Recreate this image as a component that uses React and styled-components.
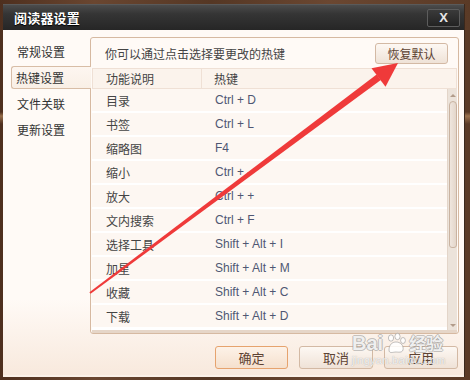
import React from 'react';
import styled, { createGlobalStyle } from 'styled-components';

const Global = createGlobalStyle`
  html, body { margin: 0; padding: 0; }
  body { background: #4d3020; font-family: "Noto Sans CJK SC", "Liberation Sans", sans-serif; }
  *, *::before, *::after { box-sizing: border-box; }
`;

const CJK = `"Noto Sans CJK SC", "Liberation Sans", sans-serif`;
const LATIN = `"Liberation Sans", "Noto Sans CJK SC", sans-serif`;

const Page = styled.div`
  position: relative;
  width: 470px;
  height: 380px;
  padding: 4px 5px 3px 3px;
  overflow: hidden;
  background:
    linear-gradient(180deg, rgba(0,0,0,0) 0, rgba(0,0,0,0) 112px, rgba(210,160,110,0.55) 116px, rgba(0,0,0,0) 124px),
    linear-gradient(90deg, #4e2f1e 0%, #6a4630 20%, #553724 45%, #6b4731 70%, #5a3a26 100%);
`;

const Dialog = styled.div`
  width: 462px;
  height: 373px;
  display: flex;
  flex-direction: column;
  border-right: 1px solid #3a281c;
`;

const TitleBar = styled.div`
  height: 26px;
  flex: none;
  display: flex;
  align-items: center;
  justify-content: space-between;
  padding: 0 4px 0 11px;
  background: linear-gradient(180deg, #4c4c4c 0%, #353535 35%, #262626 100%);
  border-top: 1px solid #5a5a5a;
`;

const Title = styled.div`
  color: #ffffff;
  font-family: ${CJK};
  font-weight: 700;
  font-size: 13px;
  letter-spacing: 0.2px;
  text-shadow: 0 1px 1px #000;
`;

const CloseButton = styled.div`
  width: 33px;
  height: 18px;
  border: 1px solid #5d5d5d;
  border-radius: 2px;
  background: linear-gradient(180deg, #3a3a3a, #222222);
  display: flex;
  align-items: center;
  justify-content: center;
  color: #e6e6e6;
  font-family: ${LATIN};
  font-weight: 700;
  font-size: 13px;
  line-height: 1;
`;

const Body = styled.div`
  flex: 1;
  display: flex;
  flex-direction: column;
  padding: 7px 5px 0 8px;
  background: linear-gradient(180deg, #fffaf6 0%, #fffaf6 78%, #f8e9dd 100%);
  border-bottom: 2px solid #fbf1e8;
`;

const Main = styled.div`
  display: flex;
  height: 297px;
`;

const Nav = styled.div`
  width: 79px;
  flex: none;
  display: flex;
  flex-direction: column;
  gap: 3px;
  padding-top: 3px;
`;

const NavItem = styled.div`
  height: 23px;
  line-height: 22px;
  font-family: ${CJK};
  font-size: 12px;
  color: #333;
  padding-left: ${p => (p.$active ? 4 : 5)}px;
  border: ${p => (p.$active ? '1px solid #d8bda6' : '1px solid transparent')};
  border-right: none;
  border-radius: 3px 0 0 3px;
  background: ${p => (p.$active ? 'linear-gradient(180deg, #fdf6f0, #f9efe6)' : 'transparent')};
  margin-right: ${p => (p.$active ? '-1px' : '0')};
  position: relative;
  z-index: ${p => (p.$active ? 1 : 0)};
`;

const Panel = styled.div`
  flex: 1;
  display: flex;
  flex-direction: column;
  border: 1px solid #d6b9a1;
  border-radius: 3px;
  background: #fffaf6;
  padding: 0 1px;
`;

const Toolbar = styled.div`
  height: 30px;
  display: flex;
  align-items: center;
  justify-content: space-between;
  padding: 0 9px 0 13px;
`;

const Hint = styled.div`
  font-family: ${CJK};
  font-size: 12px;
  color: #444;
`;

const Button = styled.div`
  width: ${p => p.$w || 74}px;
  height: ${p => p.$h || 23}px;
  display: flex;
  align-items: center;
  justify-content: center;
  border: 1px solid ${p => (p.$primary ? '#e6a36e' : '#d3b9a4')};
  border-radius: 3px;
  background: ${p => (p.$primary
    ? 'linear-gradient(180deg, #fdf2e8 0%, #f5e0cd 100%)'
    : 'linear-gradient(180deg, #fdf8f3 0%, #efe2d7 100%)')};
  font-family: ${CJK};
  font-size: ${p => p.$fs || 13}px;
  color: #5d4232;
`;

const Header = styled.div`
  height: 21px;
  display: flex;
  border: 1px solid #efe0d5;
  background: #fbf3ec;
`;

const Cell = styled.div`
  width: ${p => (p.$first ? '109px' : 'auto')};
  flex: ${p => (p.$first ? 'none' : '1')};
  padding-left: ${p => (p.$first ? 13 : 12)}px;
  border-right: ${p => (p.$first ? '1px solid #efe0d5' : 'none')};
  display: flex;
  align-items: center;
  font-family: ${CJK};
  font-size: 12px;
  color: #444;
`;

const ListArea = styled.div`
  height: 241px;
  display: flex;
  background: #ffffff;
`;

const Rows = styled.div`
  flex: 1;
  display: flex;
  flex-direction: column;
`;

const Row = styled.div`
  height: 22px;
  margin-bottom: 2px;
  display: flex;
  align-items: center;
  background: #fdf7f2;
`;

const Func = styled.div`
  width: 110px;
  flex: none;
  padding-left: 14px;
  font-family: ${CJK};
  font-size: 12px;
  color: #444;
`;

const Key = styled.div`
  padding-left: 13px;
  font-family: ${LATIN};
  font-size: 12px;
  color: #4f5773;
`;

const Scrollbar = styled.div`
  width: 10px;
  flex: none;
  display: flex;
  flex-direction: column;
  align-items: center;
  background: #ece3da;
  border-left: 1px solid #e3d5c9;
`;

const Arrow = styled.div`
  width: 0;
  height: 0;
  border-left: 3px solid transparent;
  border-right: 3px solid transparent;
  ${p => (p.$down ? 'border-top: 3px solid #b29c8a;' : 'border-bottom: 3px solid #b29c8a;')}
  margin: ${p => (p.$down ? '0 0 3px' : '5px 0 4px')};
`;

const Thumb = styled.div`
  width: 8px;
  height: 147px;
  border: 1px solid #c9b3a1;
  border-radius: 4px 4px 3px 3px;
  background: linear-gradient(90deg, #efe6de, #e4d6ca);
`;

const Spacer = styled.div`
  flex: 1;
`;

const BottomBand = styled.div`
  height: 3px;
  background: #e6d6c8;
`;

const Footer = styled.div`
  display: flex;
  justify-content: flex-end;
  gap: 11px;
  margin-top: 12px;
  padding-right: 1px;
`;

const Overlay = styled.svg`
  position: absolute;
  left: 0;
  top: 0;
  pointer-events: none;
`;

const Watermark = styled.div`
  position: absolute;
  left: 352px;
  top: 332px;
  display: flex;
  flex-direction: column;
  color: rgba(255, 255, 255, 0.85);
  text-shadow:
    1px 0 0 rgba(150, 150, 150, 0.55),
    -1px 0 0 rgba(150, 150, 150, 0.55),
    0 1px 0 rgba(150, 150, 150, 0.55),
    0 -1px 0 rgba(150, 150, 150, 0.55);
  pointer-events: none;
`;

const WmTop = styled.div`
  display: flex;
  align-items: flex-end;
  gap: 2px;
  font-family: ${LATIN};
  font-weight: 700;
  font-size: 20px;
  line-height: 22px;
`;

const WmCJK = styled.span`
  font-family: ${CJK};
  font-size: 17px;
  font-weight: 700;
`;

const WmUrl = styled.div`
  font-family: ${LATIN};
  font-size: 11px;
  line-height: 12px;
  letter-spacing: 0.3px;
  text-shadow: 0 0 1px rgba(120, 120, 120, 0.7);
`;

const rows = [
  ['目录', 'Ctrl + D'],
  ['书签', 'Ctrl + L'],
  ['缩略图', 'F4'],
  ['缩小', 'Ctrl + -'],
  ['放大', 'Ctrl + +'],
  ['文内搜索', 'Ctrl + F'],
  ['选择工具', 'Shift + Alt + I'],
  ['加星', 'Shift + Alt + M'],
  ['收藏', 'Shift + Alt + C'],
  ['下载', 'Shift + Alt + D'],
];

const navItems = ['常规设置', '热键设置', '文件关联', '更新设置'];

export default function App() {
  return (
    <Page>
      <Global />
      <Dialog>
        <TitleBar>
          <Title>阅读器设置</Title>
          <CloseButton>X</CloseButton>
        </TitleBar>
        <Body>
          <Main>
            <Nav>
              {navItems.map((n, i) => (
                <NavItem key={n} $active={i === 1}>{n}</NavItem>
              ))}
            </Nav>
            <Panel>
              <Toolbar>
                <Hint>你可以通过点击选择要更改的热键</Hint>
                <Button $w={73} $h={21} $fs={12}>恢复默认</Button>
              </Toolbar>
              <Header>
                <Cell $first>功能说明</Cell>
                <Cell>热键</Cell>
              </Header>
              <ListArea>
                <Rows>
                  {rows.map(([f, k]) => (
                    <Row key={f}>
                      <Func>{f}</Func>
                      <Key>{k}</Key>
                    </Row>
                  ))}
                </Rows>
                <Scrollbar>
                  <Arrow />
                  <Thumb />
                  <Spacer />
                  <Arrow $down />
                </Scrollbar>
              </ListArea>
              <BottomBand />
            </Panel>
          </Main>
          <Footer>
            <Button $w={73} $primary>确定</Button>
            <Button>取消</Button>
            <Button>应用</Button>
          </Footer>
        </Body>
      </Dialog>
      <Overlay width="470" height="380" viewBox="0 0 470 380">
        <polygon
          points="89.4,292.2 90.6,293.8 380.8,80.1 376.6,74.5"
          fill="#ef3a3a"
        />
        <polygon points="398,63 371.5,68.3 385.5,86.8" fill="#ef3a3a" />
      </Overlay>
      <Watermark>
        <WmTop>
          <span>Bai</span>
          <svg width="22" height="22" viewBox="0 0 22 22">
            <g fill="rgba(255,255,255,0.85)" stroke="rgba(140,140,140,0.6)" strokeWidth="0.9">
              <ellipse cx="6" cy="6" rx="2.6" ry="3.2" />
              <ellipse cx="12.5" cy="4.5" rx="2.6" ry="3.2" />
              <ellipse cx="18" cy="8.5" rx="2.4" ry="3" />
              <path d="M4 18 C4 12 8 10 11 10 C15 10 19 13 18 18 C17 21 13 20 11 20 C8 20 4 22 4 18 Z" />
            </g>
          </svg>
          <WmCJK>经验</WmCJK>
        </WmTop>
        <WmUrl>jingyan.baidu.com</WmUrl>
      </Watermark>
    </Page>
  );
}
